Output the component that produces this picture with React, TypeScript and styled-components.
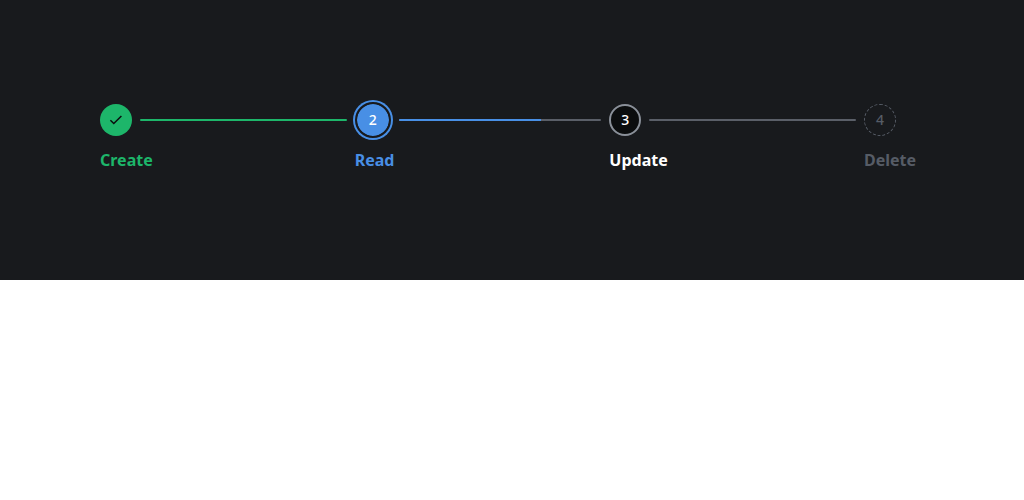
import React from "react";
import styled, { createGlobalStyle, css } from "styled-components";

type Status = "complete" | "active" | "pending" | "disabled";

interface StepData {
  label: string;
  status: Status;
  progress?: number;
}

const steps: StepData[] = [
  { label: "Create", status: "complete", progress: 100 },
  { label: "Read", status: "active", progress: 70 },
  { label: "Update", status: "pending", progress: 0 },
  { label: "Delete", status: "disabled" },
];

const colors = {
  surface: "#181a1d",
  green: "#1db66a",
  blue: "#488fe5",
  track: "#5a5f68",
  outline: "#8a9099",
  muted: "#565c66",
  ink: "#0b0d0e",
  white: "#ffffff",
};

const accent: Record<Status, string> = {
  complete: colors.green,
  active: colors.blue,
  pending: colors.white,
  disabled: colors.muted,
};

const GlobalStyle = createGlobalStyle`
  *, *::before, *::after { box-sizing: border-box; }
  body {
    margin: 0;
    background: #ffffff;
    font-family: "Noto Sans", sans-serif;
  }
`;

const Panel = styled.main`
  padding: 100px 100px 108px;
  background: ${colors.surface};
`;

const StepList = styled.ol`
  display: grid;
  grid-template-columns: repeat(3, 1fr) 60px;
  margin: 0;
  padding: 0;
  list-style: none;
`;

const Step = styled.li`
  min-width: 0;
`;

const StepHead = styled.div`
  display: flex;
  align-items: center;
  gap: 8px;
  height: 40px;
  padding-right: 8px;
`;

const markerStyles = {
  complete: css`
    background: ${colors.green};
    color: ${colors.ink};
  `,
  active: css`
    width: 36px;
    height: 36px;
    border: 2px solid ${colors.surface};
    background: ${colors.blue};
    background-clip: padding-box;
    box-shadow: 0 0 0 2px ${colors.blue};
    color: ${colors.white};
  `,
  pending: css`
    border: 2px solid ${colors.outline};
    background: ${colors.ink};
    color: ${colors.white};
  `,
  disabled: css`
    border: 1px dashed ${colors.muted};
    color: ${colors.muted};
  `,
};

const Marker = styled.span<{ $status: Status }>`
  display: flex;
  flex: none;
  align-items: center;
  justify-content: center;
  width: 32px;
  height: 32px;
  border-radius: 50%;
  font-size: 14px;
  font-weight: 500;
  line-height: 20px;
  ${({ $status }) => markerStyles[$status]}
`;

const Track = styled.div`
  flex: 1;
  height: 2px;
  border-radius: 1px;
  background: ${colors.track};
  overflow: hidden;
`;

const Fill = styled.div<{ $status: Status }>`
  height: 100%;
  background: ${({ $status }) => accent[$status]};
`;

const Label = styled.div<{ $status: Status }>`
  margin-top: 8px;
  color: ${({ $status }) => accent[$status]};
  font-size: 16px;
  font-weight: 700;
  line-height: 24px;
`;

const CheckIcon = () => (
  <svg width="16" height="16" viewBox="0 0 16 16" fill="none" aria-hidden="true">
    <path d="M2.4 8.2 L5.8 11.5 L13.4 4" stroke="currentColor" strokeWidth="1.5" />
  </svg>
);

export default function App() {
  return (
    <>
      <GlobalStyle />
      <Panel>
        <StepList>
          {steps.map(({ label, status, progress }, index) => (
            <Step key={label} aria-current={status === "active" ? "step" : undefined}>
              <StepHead>
                <Marker $status={status}>
                  {status === "complete" ? <CheckIcon /> : index + 1}
                </Marker>
                {progress !== undefined && (
                  <Track>
                    <Fill $status={status} style={{ width: `${progress}%` }} />
                  </Track>
                )}
              </StepHead>
              <Label $status={status}>{label}</Label>
            </Step>
          ))}
        </StepList>
      </Panel>
    </>
  );
}
